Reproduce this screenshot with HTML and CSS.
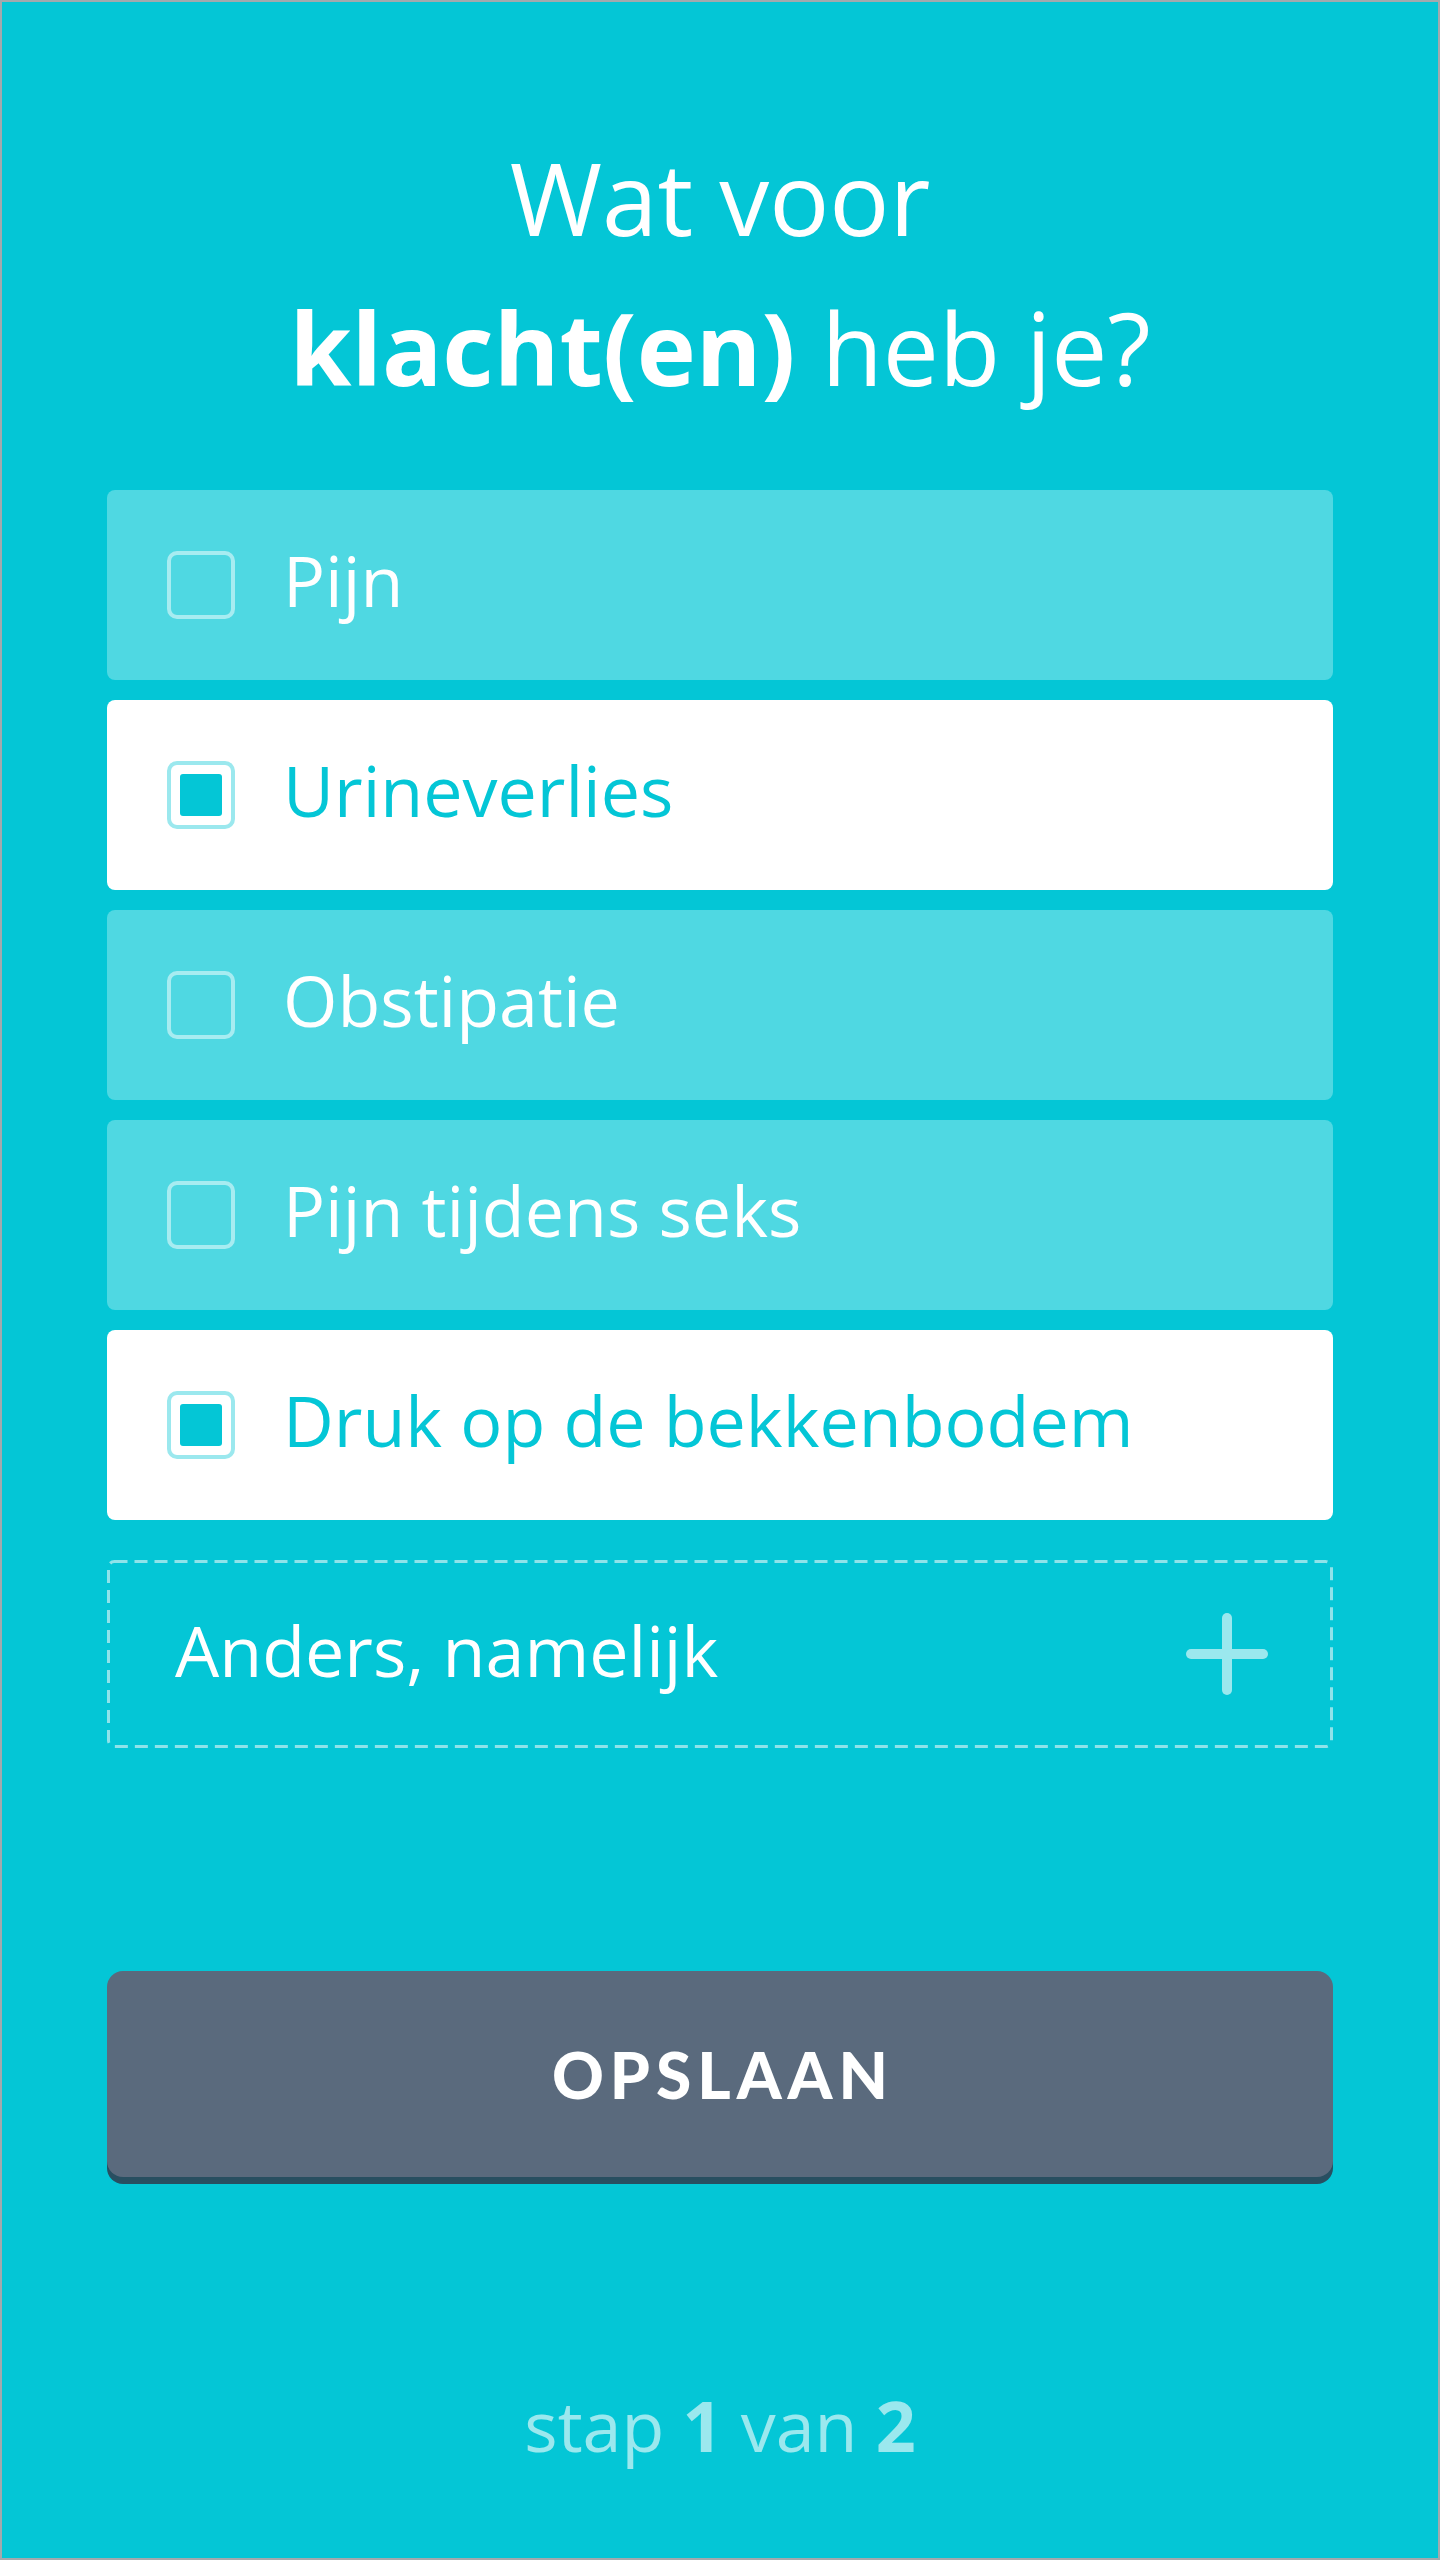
FILE: index.html
```html
<!DOCTYPE html>
<html lang="nl">
<head>
<meta charset="utf-8">
<title>Wat voor klacht(en) heb je?</title>
<link rel="stylesheet" href="styles.css">
</head>
<body>
<div class="screen">
  <h1 class="title">Wat voor<br><strong>klacht(en)</strong> heb je?</h1>
  <ul class="options">
    <li class="option"><span class="check"></span><span class="label">Pijn</span></li>
    <li class="option is-selected"><span class="check"></span><span class="label">Urineverlies</span></li>
    <li class="option"><span class="check"></span><span class="label">Obstipatie</span></li>
    <li class="option"><span class="check"></span><span class="label">Pijn tijdens seks</span></li>
    <li class="option is-selected"><span class="check"></span><span class="label">Druk op de bekkenbodem</span></li>
  </ul>
  <div class="other">
    <svg class="other-border" width="1226" height="188" viewBox="0 0 1226 188" aria-hidden="true">
      <rect x="1.5" y="1.5" width="1223" height="185" rx="6" ry="6" fill="none" stroke="#8fe3ea" stroke-width="3" stroke-dasharray="13 7"/>
    </svg>
    <span class="other-label">Anders, namelijk</span>
    <svg class="plus" width="82" height="82" viewBox="0 0 82 82" aria-hidden="true">
      <line x1="41" y1="5" x2="41" y2="77" stroke="#9be8ee" stroke-width="10" stroke-linecap="round"/>
      <line x1="5" y1="41" x2="77" y2="41" stroke="#9be8ee" stroke-width="10" stroke-linecap="round"/>
    </svg>
  </div>
  <button class="save" type="button">OPSLAAN</button>
  <p class="step">stap <b>1</b> van <b>2</b></p>
</div>
</body>
</html>
```
FILE: styles.css
```css
html, body {
  margin: 0;
  padding: 0;
  background: #04c6d6;
}

.screen {
  box-sizing: border-box;
  width: 1440px;
  height: 2560px;
  border: 2px solid #a3a9ad;
  padding: 120px 105px 0;
  background: #04c6d6;
  font-family: "Open Sans", "Noto Sans", sans-serif;
  color: #ffffff;
}

.title {
  margin: 0;
  font-size: 100px;
  line-height: 150px;
  font-weight: 400;
  text-align: center;
  color: #ffffff;
}

.title strong {
  font-weight: 700;
}

.options {
  list-style: none;
  margin: 68px 0 0;
  padding: 0;
  display: flex;
  flex-direction: column;
  gap: 20px;
}

.option {
  display: flex;
  align-items: center;
  height: 190px;
  padding-left: 60px;
  border-radius: 8px;
  background: #4fd8e2;
  color: #ffffff;
  font-size: 70px;
}

.check {
  box-sizing: border-box;
  flex: 0 0 68px;
  width: 68px;
  height: 68px;
  border: 4px solid #a7ecf1;
  border-radius: 10px;
  display: flex;
  align-items: center;
  justify-content: center;
}

.label {
  margin-left: 48px;
  padding-bottom: 10px;
  line-height: normal;
}

.option.is-selected {
  background: #ffffff;
  color: #04c6d6;
}

.option.is-selected .check {
  border-color: #9be8ee;
}

.option.is-selected .check::after {
  content: "";
  width: 42px;
  height: 42px;
  border-radius: 3px;
  background: #04c6d6;
}

.other {
  position: relative;
  box-sizing: border-box;
  margin-top: 40px;
  height: 188px;
  padding: 0 65px 0 68px;
  display: flex;
  align-items: center;
  justify-content: space-between;
  font-size: 70px;
  color: #ffffff;
}

.other-border {
  position: absolute;
  left: 0;
  top: 0;
}

.other-label {
  padding-bottom: 8px;
  line-height: normal;
}

.plus {
  display: block;
}

.save {
  display: block;
  width: 100%;
  height: 206px;
  margin-top: 223px;
  border: 0;
  border-radius: 16px;
  background: #5a6a7d;
  box-shadow: 0 7px 0 #284f61;
  color: #ffffff;
  font-family: "Lato", "Open Sans", sans-serif;
  font-weight: 900;
  font-size: 64px;
  letter-spacing: 6px;
  padding: 0 0 0 6px;
  cursor: pointer;
}

.step {
  margin: 200px 0 0;
  text-align: center;
  font-size: 70px;
  line-height: normal;
  color: #9be8ee;
}

.step b {
  font-weight: 700;
}
```
